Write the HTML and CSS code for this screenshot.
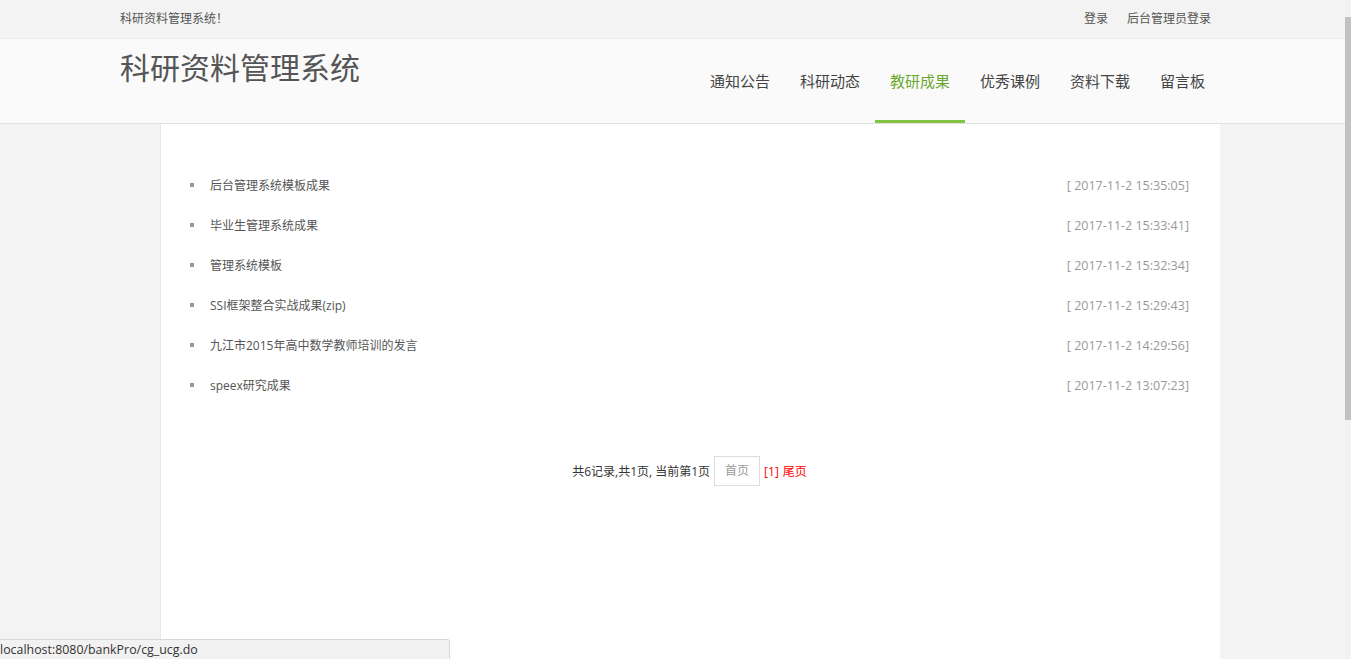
FILE: index.html
```html
<!DOCTYPE html>
<html lang="zh-CN">
<head>
<meta charset="UTF-8">
<meta name="viewport" content="width=device-width, initial-scale=1.0">
<title>科研资料管理系统</title>
<link rel="stylesheet" href="styles.css">
</head>
<body>
<div class="page">
  <div class="topbar">
    <div class="wrap topbar-inner">
      <span class="welcome">科研资料管理系统！</span>
      <div class="top-links">
        <a href="#">登录</a>
        <a href="#">后台管理员登录</a>
      </div>
    </div>
  </div>

  <div class="header">
    <div class="wrap header-inner">
      <h1 class="logo">科研资料管理系统</h1>
      <ul class="nav">
        <li><a href="#">通知公告</a></li>
        <li><a href="#">科研动态</a></li>
        <li class="active"><a href="#">教研成果</a></li>
        <li><a href="#">优秀课例</a></li>
        <li><a href="#">资料下载</a></li>
        <li><a href="#">留言板</a></li>
      </ul>
    </div>
  </div>

  <div class="wrap">
    <div class="main">
      <ul class="list">
        <li><a href="#">后台管理系统模板成果</a><span class="date">[ 2017-11-2 15:35:05]</span></li>
        <li><a href="#">毕业生管理系统成果</a><span class="date">[ 2017-11-2 15:33:41]</span></li>
        <li><a href="#">管理系统模板</a><span class="date">[ 2017-11-2 15:32:34]</span></li>
        <li><a href="#">SSI框架整合实战成果(zip)</a><span class="date">[ 2017-11-2 15:29:43]</span></li>
        <li><a href="#">九江市2015年高中数学教师培训的发言</a><span class="date">[ 2017-11-2 14:29:56]</span></li>
        <li><a href="#">speex研究成果</a><span class="date">[ 2017-11-2 13:07:23]</span></li>
      </ul>
      <div class="pager">
        <span>共6记录,共1页, 当前第1页</span>
        <a href="#" class="pager-btn">首页</a>
        <a href="#" class="pager-red">[1]</a>
        <a href="#" class="pager-red">尾页</a>
      </div>
    </div>
  </div>
</div>

<div class="scrollbar"><div class="thumb"></div></div>
<div class="statusbar">localhost:8080/bankPro/cg_ucg.do</div>
</body>
</html>
```

FILE: styles.css
```css
* {
  box-sizing: border-box;
}
body {
  margin: 0;
  background: #f3f3f3;
  font-family: "Open Sans", "Noto Sans CJK SC", sans-serif;
  font-size: 12px;
  color: #555;
  overflow: hidden;
}
a {
  text-decoration: none;
  color: inherit;
}
ul {
  list-style: none;
  margin: 0;
  padding: 0;
}
.page {
  margin-right: 6px;
}
.wrap {
  width: 1105px;
  padding-right: 5px;
  margin: 0 auto;
}

.topbar {
  height: 39px;
  background: #f3f3f3;
  border-bottom: 1px solid #ececec;
}
.topbar-inner {
  display: flex;
  justify-content: space-between;
  line-height: 38px;
}
.top-links {
  display: flex;
  gap: 19px;
  padding-right: 9px;
}

.header {
  height: 85px;
  background: #fafafa;
  border-bottom: 1px solid #e3e3e3;
}
.header-inner {
  display: flex;
  justify-content: space-between;
}
.logo {
  margin: 0;
  padding-top: 9px;
  font-size: 30px;
  font-weight: normal;
  line-height: 40px;
  color: #555;
}
.nav {
  display: flex;
}
.nav li a {
  display: block;
  height: 84px;
  line-height: 84px;
  padding: 0 15px;
  font-size: 15px;
  color: #444;
}
.nav li.active a {
  color: #6aa82f;
  border-bottom: 3px solid #82c341;
}

.main {
  margin-left: 40px;
  width: 1060px;
  min-height: 540px;
  background: #fff;
  border-left: 1px solid #e8e8e8;
  padding: 41px 31px 0 29px;
}
.list li {
  display: flex;
  justify-content: space-between;
  align-items: center;
  height: 40px;
}
.list li a {
  display: flex;
  align-items: center;
  color: #555;
}
.list li a::before {
  content: "";
  width: 4px;
  height: 4px;
  background: #999;
  margin-right: 16px;
}
.date {
  color: #999;
  font-size: 12.5px;
}

.pager {
  margin-top: 51px;
  display: flex;
  justify-content: center;
  align-items: center;
  gap: 4px;
  color: #333;
}
.pager-btn {
  display: block;
  width: 46px;
  height: 30px;
  line-height: 28px;
  border: 1px solid #ddd;
  text-align: center;
  color: #999;
}
.pager-red {
  color: #f00;
}

.scrollbar {
  position: fixed;
  top: 0;
  right: 0;
  width: 6px;
  height: 100%;
  background: #f1f1f1;
}
.thumb {
  margin-top: 17px;
  height: 403px;
  background: #c1c1c1;
}

.statusbar {
  position: fixed;
  left: 0;
  bottom: 0;
  width: 450px;
  height: 20px;
  line-height: 19px;
  background: #f2f2f2;
  border: 1px solid #d8d8d8;
  border-left: none;
  border-bottom: none;
  border-top-right-radius: 3px;
  font-size: 12.4px;
  color: #333;
}
```
